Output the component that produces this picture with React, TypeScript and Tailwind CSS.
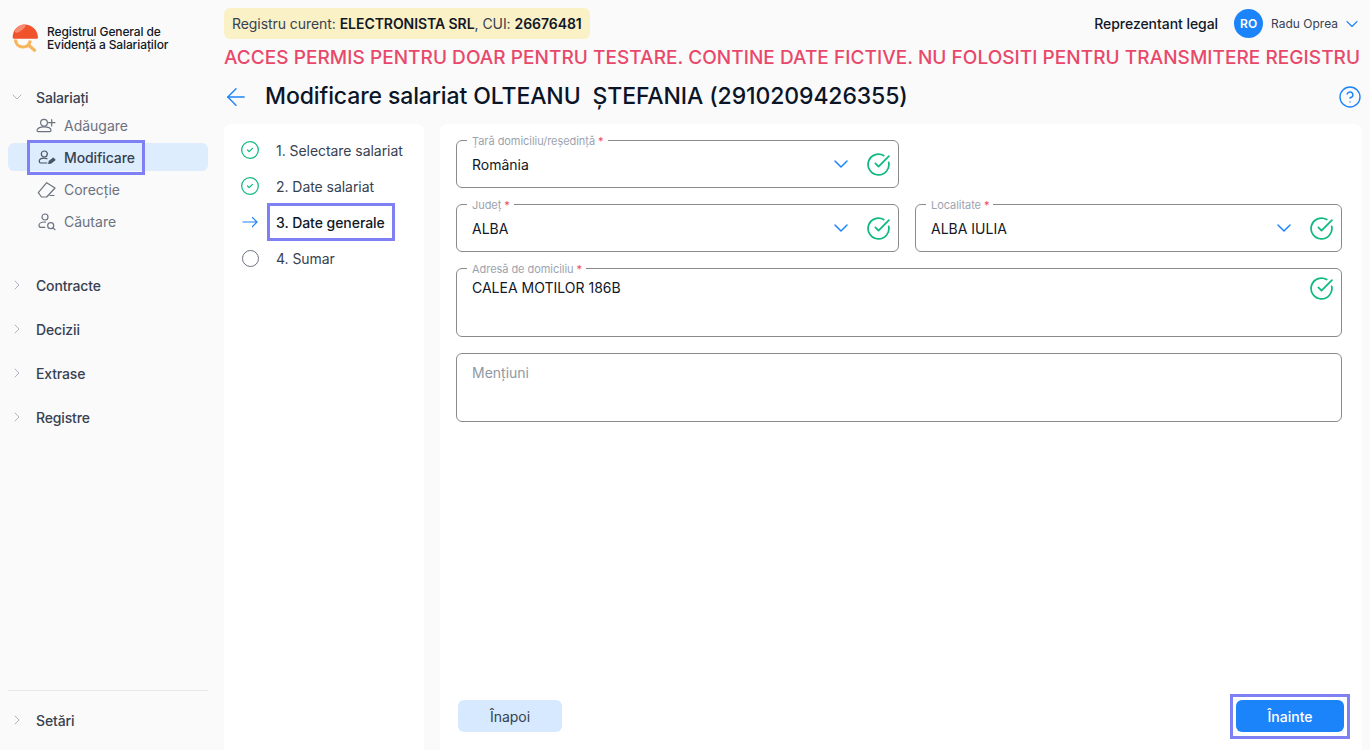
import { ReactNode } from 'react';
import { ArrowLeft, ChevronDown, ChevronRight, CircleCheck, CircleCheckBig, CircleHelp } from 'lucide-react';

const Logo = () => (
	<svg width="27" height="28" viewBox="0 0 27 28" fill="none">
		<path d="M3.500 15.500c0 5 3.500 7.500 7.500 7.500 3.800 0 6.500-2.500 7.300-6.500" stroke="#f7b55c" strokeWidth="3.200" />
		<path d="M17 21.500l5.500 4.800" stroke="#f7b55c" strokeWidth="3.200" strokeLinecap="round" />
		<path d="M.7 13.500C.7 6 6 .5 12.500.5 20 .5 25.700 6 26 13.500c0 .7-.4 1.200-1.100 1.200H1.800c-.7 0-1.100-.5-1.100-1.200z" fill="#f0522c" />
		<path d="M3 6.500C5 3 8.500.8 12 .6c1.500 0 2 1.200 1.200 2.200C11.500 5.300 9 7 6 8.500 3.800 9.300 2.200 8 3 6.500z" fill="#f98a72" />
	</svg>
);

const NavAdd = () => (
	<svg width="20" height="20" viewBox="0 0 20 20" fill="none" stroke="#6b7280" strokeWidth="1.200" strokeLinecap="round">
		<circle cx="8" cy="7.700" r="3.400" />
		<path d="M1 15.500c0-2.200 3-3.600 7-3.600s7 1.400 7 3.600c0 .8-.5 1.200-1.300 1.200H2.300c-.8 0-1.300-.4-1.300-1.200zM15.700 4.500v6.400M12.500 7.700h6.400" />
	</svg>
);

const NavEdit = () => (
	<svg width="20" height="20" viewBox="0 0 20 20" fill="none" stroke="#4b5563" strokeWidth="1.200" strokeLinecap="round" strokeLinejoin="round">
		<circle cx="8.300" cy="7" r="3" />
		<path d="M11 11.700c-1-.4-2-.6-3-.6-3 0-4.800 1.500-4.800 3.200 0 1 .6 1.700 1.700 1.700h6" />
		<path d="M12.800 16.400l.5-2.200 4-3.100 1.700 1.800-4 3.100z" fill="#4b5563" />
	</svg>
);

const NavEraser = () => (
	<svg width="20" height="20" viewBox="0 0 20 20" fill="none" stroke="#6b7280" strokeWidth="1.200" strokeLinecap="round" strokeLinejoin="round">
		<path d="M2.300 13.700L10.700 3.700 19 9l-8.300 9H5.500z" />
		<path d="M14 16.500h4" />
	</svg>
);

const NavSearch = () => (
	<svg width="20" height="20" viewBox="0 0 20 20" fill="none" stroke="#6b7280" strokeWidth="1.200" strokeLinecap="round">
		<circle cx="9" cy="6" r="3" />
		<path d="M9.500 11.100c-.3 0-.7-.1-1-.1-3 0-5.500 1.500-5.500 3.300 0 1.300.7 2 1.800 2h4" />
		<circle cx="14.700" cy="14.700" r="3" />
		<path d="M16.900 16.900l2.100 1.800" />
	</svg>
);

const StepArrow = () => (
	<svg width="18" height="18" viewBox="0 0 18 18" fill="none" stroke="#1c84fb" strokeWidth="1.200" strokeLinecap="round" strokeLinejoin="round" className="shrink-0">
		<path d="M2 9h14M11.500 4.500L16 9l-4.500 4.500" />
	</svg>
);

const Group = ({ label, open, className }: { label: string; open?: boolean; className?: string }) => (
	<div className={`flex items-center h-7 pl-[1px] text-[14px] font-medium tracking-[-0.15px] text-[#374151] ${className ?? ''}`}>
		{open ? (
			<ChevronDown size={16} strokeWidth={1.200} className="text-[#9ca3af]" />
		) : (
			<ChevronRight size={16} strokeWidth={1.200} className="text-[#9ca3af]" />
		)}
		<span className="ml-[11px]">{label}</span>
	</div>
);

const NavItem = ({ icon, label }: { icon: ReactNode; label: string }) => (
	<div className="flex items-center h-8 pl-[28px] gap-[8px] text-[14px] text-[#6b7280]">
		{icon}
		<span>{label}</span>
	</div>
);

const Sidebar = () => (
	<aside className="w-[224px] shrink-0 flex flex-col pl-2 pr-4">
		<div className="flex items-center h-[76px] pl-[4px] gap-[8px]">
			<Logo />
			<div className="text-[12px] leading-[13px] font-medium tracking-[-0.12px] text-[#111827]">
				Registrul General de
				<br />
				Evidență a Salariaților
			</div>
		</div>
		<Group label="Salariați" open className="mt-[7px]" />
		<div className="flex flex-col -mt-[2px]">
			<NavItem icon={<NavAdd />} label="Adăugare" />
			<div className="h-7 my-[2px] flex items-center rounded-md bg-[#deedfd] pl-[22px]">
				<div className="flex items-center gap-[8px] h-[29px] w-[112px] pl-[6px] text-[14px] font-medium tracking-[-0.1px] text-[#374151] outline outline-[3px] outline-[#8080f5]">
					<NavEdit />
					<span>Modificare</span>
				</div>
			</div>
			<NavItem icon={<NavEraser />} label="Corecție" />
			<NavItem icon={<NavSearch />} label="Căutare" />
		</div>
		<div className="mt-[34px] flex flex-col gap-4">
			<Group label="Contracte" />
			<Group label="Decizii" />
			<Group label="Extrase" />
			<Group label="Registre" />
		</div>
		<div className="mt-auto h-[60px] border-t border-[#e5e7eb] pt-[15px]">
			<Group label="Setări" />
		</div>
	</aside>
);

const Step = ({ icon, label }: { icon: ReactNode; label: string }) => (
	<div className="flex items-center h-9 pl-[17px] text-[14px] tracking-[-0.05px] text-[#374151]">
		<span className="w-[18px] flex justify-center">{icon}</span>
		<span className="ml-[17px]">{label}</span>
	</div>
);

const Steps = () => (
	<div className="w-[200px] shrink-0 rounded-t-lg bg-white pt-[8px]">
		<Step icon={<CircleCheck size={20} strokeWidth={1.500} className="shrink-0 text-[#10b981]" />} label="1. Selectare salariat" />
		<Step icon={<CircleCheck size={20} strokeWidth={1.500} className="shrink-0 text-[#10b981]" />} label="2. Date salariat" />
		<div className="flex items-center h-9 pl-[17px] text-[14px] font-medium tracking-[-0.05px] text-[#111827]">
			<span className="w-[18px] flex justify-center">
				<StepArrow />
			</span>
			<span className="ml-[11px] pl-[6px] pr-[7px] h-[32px] flex items-center outline outline-[3px] outline-[#8080f5]">3. Date generale</span>
		</div>
		<Step
			icon={<span className="w-[17px] h-[17px] rounded-full border border-[#6b7280]" />}
			label="4. Sumar"
		/>
	</div>
);

const Field = ({
	label,
	className,
	children,
}: {
	label: string;
	className?: string;
	children: ReactNode;
}) => (
	<div className={`relative rounded-md border border-[#8a8a8a] ${className ?? ''}`}>
		<span className="absolute -top-[6px] left-[10px] bg-white pl-[5px] pr-[4px] text-[11px] leading-[13px] tracking-[-0.05px] text-[#9ca3af]">
			{label}
			<span className="text-[#e8486a]"> *</span>
		</span>
		{children}
	</div>
);

const SelectField = ({ label, value, className }: { label: string; value: string; className: string }) => (
	<Field label={label} className={`h-12 flex items-center pl-[15px] pr-[7px] ${className}`}>
		<span className="flex-1 text-[14px] text-[#111827]">{value}</span>
		<ChevronDown size={24} strokeWidth={1.500} className="text-[#1c84fb]" />
		<CircleCheckBig size={25} strokeWidth={1.700} className="ml-[13px] text-[#10b981]" />
	</Field>
);

const Form = () => (
	<div className="flex-1 rounded-t-lg bg-white pt-4 px-4 pb-[14px] flex flex-col">
		<div className="flex flex-col gap-4 w-[886px]">
			<SelectField label="Țară domiciliu/reședință" value="România" className="w-[443px]" />
			<div className="flex gap-4">
				<SelectField label="Județ" value="ALBA" className="w-[443px]" />
				<SelectField label="Localitate" value="ALBA IULIA" className="flex-1" />
			</div>
			<Field label="Adresă de domiciliu" className="h-[69px] flex justify-between pl-[15px] pr-[7px] pt-[7px]">
				<span className="text-[14px] leading-[20px] pt-[2px] text-[#111827]">CALEA MOTILOR 186B</span>
				<CircleCheckBig size={25} strokeWidth={1.700} className="text-[#10b981]" />
			</Field>
			<div className="h-[69px] rounded-md border border-[#8a8a8a] pl-[15px] pt-[9px] text-[14px] leading-[20px] text-[#9098a3]">Mențiuni</div>
		</div>
		<div className="mt-auto flex items-start justify-between pl-[2px] -mr-[1px]">
			<button className="mt-[3px] w-[104px] h-[32px] rounded-md bg-[#d6e9fe] text-[14px] text-[#374151]">Înapoi</button>
			<div className="pt-[3px] pb-[4px] px-[3px] outline outline-[3px] outline-[#8080f5]">
				<button className="block w-[108px] h-[32px] rounded-md bg-[#1c84fb] text-[14px] font-medium text-white">Înainte</button>
			</div>
		</div>
	</div>
);

export default function App() {
	return (
		<div className="flex h-[750px] w-[1370px] overflow-hidden bg-[#fafafa] font-['Inter',sans-serif]">
			<Sidebar />
			<main className="flex-1 flex flex-col pr-[8px]">
				<div className="flex items-start justify-between h-[47px] pt-[8px]">
					<div className="h-[31px] flex items-center rounded-md bg-[#faf1c6] px-2 text-[14px] tracking-[-0.06px] text-[#374151]">
						<span>
							Registru curent: <b className="font-semibold text-[#111827]">ELECTRONISTA SRL</b>, CUI:{' '}
							<b className="font-semibold text-[#111827]">26676481</b>
						</span>
					</div>
					<div className="flex items-center h-[31px]">
						<span className="text-[14px] font-medium tracking-[-0.05px] text-[#111827]">Reprezentant legal</span>
						<span className="ml-4 w-[29px] h-[29px] rounded-full bg-[#1c84fb] flex items-center justify-center text-[12px] font-semibold text-white">RO</span>
						<span className="ml-[8px] text-[12px] text-[#374151]">Radu Oprea</span>
						<ChevronDown size={20} strokeWidth={1.300} className="ml-[4px] text-[#1c84fb]" />
					</div>
				</div>
				<div className="text-[19px] leading-[22px] font-medium tracking-[0.05px] text-[#e8486a] whitespace-nowrap">
					ACCES PERMIS PENTRU DOAR PENTRU TESTARE. CONTINE DATE FICTIVE. NU FOLOSITI PENTRU TRANSMITERE REGISTRU
				</div>
				<div className="flex items-center h-[55px]">
					<ArrowLeft size={28} strokeWidth={1.200} className="-ml-[2px] text-[#1c84fb]" />
					<h1 className="ml-[15px] flex-1 text-[23px] font-medium tracking-[-0.11px] text-[#0b1528] whitespace-pre">Modificare salariat OLTEANU  ȘTEFANIA (2910209426355)</h1>
					<CircleHelp size={24} strokeWidth={1.400} className="text-[#1c84fb]" />
				</div>
				<div className="flex-1 flex gap-4 min-h-0">
					<Steps />
					<Form />
				</div>
			</main>
		</div>
	);
}
